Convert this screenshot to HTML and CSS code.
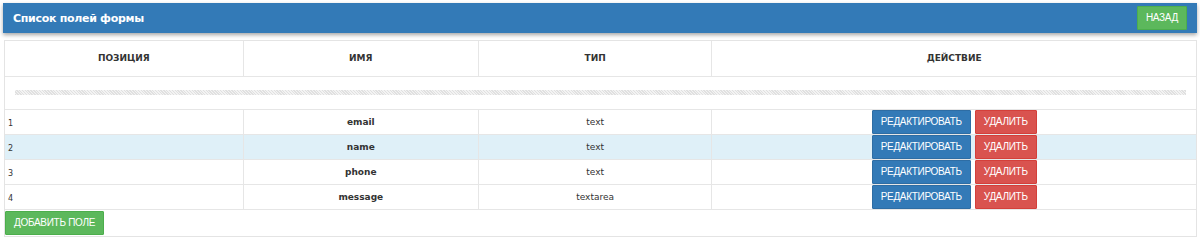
FILE: index.html
```html
<!DOCTYPE html>
<html lang="ru">
<head>
    <meta charset="UTF-8">
    <title>Список полей формы</title>
    <link rel="stylesheet" href="styles.css">
</head>
<body>
    <div class="page">
        <div class="panel-heading">
            <h1 class="panel-title">Список полей формы</h1>
            <a href="#" class="btn btn-success">Назад</a>
        </div>

        <div class="panel-body">
            <table class="fields-table">
                <colgroup>
                    <col class="col-pos">
                    <col class="col-name">
                    <col class="col-type">
                    <col>
                </colgroup>
                <thead>
                    <tr>
                        <th>Позиция</th>
                        <th>Имя</th>
                        <th>Тип</th>
                        <th>Действие</th>
                    </tr>
                </thead>
                <tbody>
                    <tr class="loading-row">
                        <td colspan="4"><div class="progress-striped"></div></td>
                    </tr>
                    <tr>
                        <td class="cell-pos">1</td>
                        <td class="cell-name">email</td>
                        <td class="cell-type">text</td>
                        <td class="cell-action">
                            <a href="#" class="btn btn-primary">Редактировать</a>
                            <a href="#" class="btn btn-danger">Удалить</a>
                        </td>
                    </tr>
                    <tr class="row-info">
                        <td class="cell-pos">2</td>
                        <td class="cell-name">name</td>
                        <td class="cell-type">text</td>
                        <td class="cell-action">
                            <a href="#" class="btn btn-primary">Редактировать</a>
                            <a href="#" class="btn btn-danger">Удалить</a>
                        </td>
                    </tr>
                    <tr>
                        <td class="cell-pos">3</td>
                        <td class="cell-name">phone</td>
                        <td class="cell-type">text</td>
                        <td class="cell-action">
                            <a href="#" class="btn btn-primary">Редактировать</a>
                            <a href="#" class="btn btn-danger">Удалить</a>
                        </td>
                    </tr>
                    <tr>
                        <td class="cell-pos">4</td>
                        <td class="cell-name">message</td>
                        <td class="cell-type">textarea</td>
                        <td class="cell-action">
                            <a href="#" class="btn btn-primary">Редактировать</a>
                            <a href="#" class="btn btn-danger">Удалить</a>
                        </td>
                    </tr>
                </tbody>
            </table>
            <div class="table-footer">
                <a href="#" class="btn btn-success">Добавить поле</a>
            </div>
        </div>
    </div>
</body>
</html>
```

FILE: styles.css
```css
* {
    margin: 0;
    padding: 0;
    box-sizing: border-box;
}

body {
    background: #fff;
    color: #333;
    font-family: "DejaVu Sans", Verdana, sans-serif;
}

.page {
    padding: 3px;
}

.panel-heading {
    height: 30px;
    background: #337ab7;
    display: flex;
    justify-content: space-between;
    align-items: center;
    padding: 0 10px;
    box-shadow: 0 2px 4px rgba(0, 0, 0, 0.35);
}

.panel-title {
    color: #fff;
    font-size: 11px;
    font-weight: bold;
    letter-spacing: -0.3px;
}

.btn {
    display: inline-block;
    height: 24px;
    line-height: 22px;
    padding: 0 8px;
    font-family: "Liberation Sans", Arial, sans-serif;
    font-size: 10px;
    letter-spacing: -0.3px;
    text-transform: uppercase;
    color: #fff;
    text-decoration: none;
    border: 1px solid transparent;
    border-radius: 1px;
    vertical-align: middle;
}

.btn-success {
    background: #5cb85c;
    border-color: #4cae4c;
}

.btn-primary {
    background: #337ab7;
    border-color: #2e6da4;
}

.btn-danger {
    background: #d9534f;
    border-color: #d43f3a;
}

.panel-body {
    margin: 7px 0 0 1px;
    border: 1px solid #e4e4e4;
}

.fields-table {
    width: 100%;
    table-layout: fixed;
    border-collapse: collapse;
    font-size: 9px;
}

.col-pos { width: 20%; }
.col-name { width: 19.75%; }
.col-type { width: 19.6%; }

.fields-table th,
.fields-table td {
    border-left: 1px solid #e6e6e6;
    border-bottom: 1px solid #e6e6e6;
    vertical-align: middle;
}

.fields-table th:first-child,
.fields-table td:first-child {
    border-left: none;
}

.fields-table th {
    height: 35px;
    font-weight: bold;
    text-transform: uppercase;
    color: #333;
}

.loading-row td {
    height: 33px;
    padding: 0 10px;
}

.progress-striped {
    height: 5px;
    background-color: #f3f3f3;
    background-image: repeating-linear-gradient(45deg, #e0e0e0 0, #e0e0e0 1px, transparent 1px, transparent 2px);
}

.fields-table tbody tr:not(.loading-row) td {
    height: 25px;
    padding: 0 3px;
}

.row-info td {
    background: #dff0f8;
}

.fields-table tbody tr td.cell-pos {
    font-size: 8px;
    padding-top: 4px;
}

.cell-name {
    text-align: center;
    font-weight: bold;
}

.cell-type {
    text-align: center;
}

.cell-action {
    text-align: center;
    font-size: 0;
}

.cell-action .btn + .btn {
    margin-left: 4px;
}

.table-footer {
    padding: 1px 0;
}
```
